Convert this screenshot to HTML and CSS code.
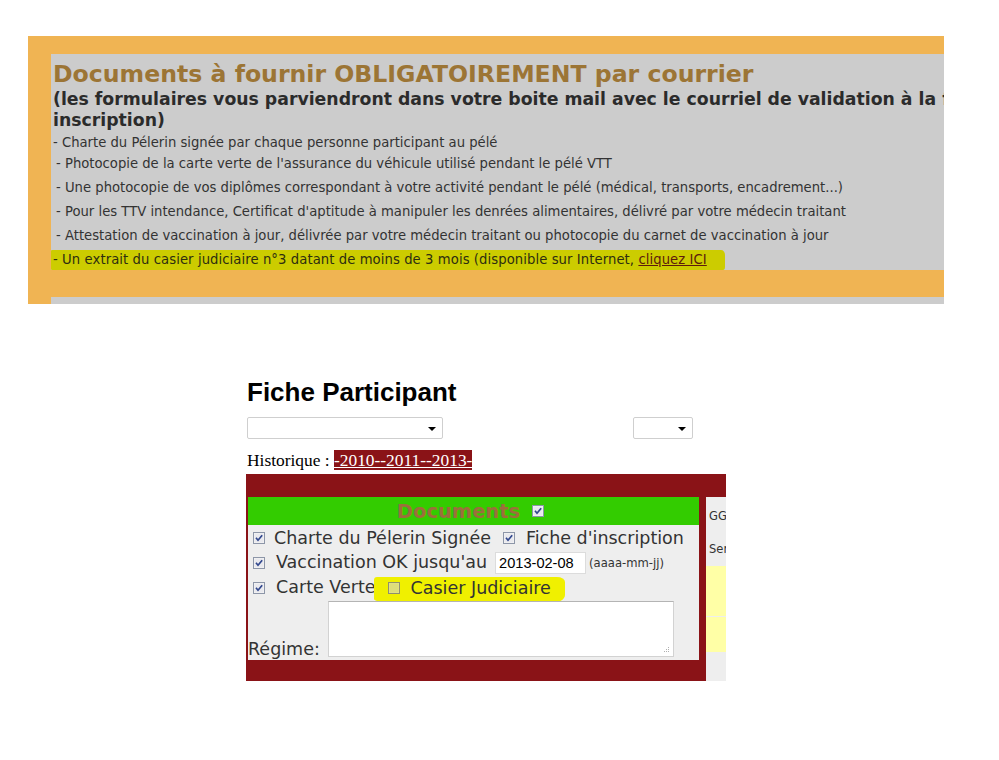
FILE: index.html
```html
<!DOCTYPE html>
<html lang="fr">
<head>
<meta charset="utf-8">
<title>Fiche Participant</title>
<link rel="stylesheet" href="styles.css">
</head>
<body>
<section class="notice">
  <div class="notice-box">
    <h2 class="notice-title">Documents à fournir OBLIGATOIREMENT par courrier</h2>
    <p class="notice-sub">(les formulaires vous parviendront dans votre boite mail avec le courriel de validation à la fin de votre<br>inscription)</p>
    <ul class="notice-list">
      <li class="item-first">- Charte du Pélerin signée par chaque personne participant au pélé</li>
      <li class="item-indent">- Photocopie de la carte verte de l'assurance du véhicule utilisé pendant le pélé VTT</li>
      <li class="item-indent">- Une photocopie de vos diplômes correspondant à votre activité pendant le pélé (médical, transports, encadrement...)</li>
      <li class="item-indent">- Pour les TTV intendance, Certificat d'aptitude à manipuler les denrées alimentaires, délivré par votre médecin traitant</li>
      <li class="item-indent">- Attestation de vaccination à jour, délivrée par votre médecin traitant ou photocopie du carnet de vaccination à jour</li>
      <li class="item-hl"><span class="hl-mark">- Un extrait du casier judiciaire n°3 datant de moins de 3 mois (disponible sur Internet, <a class="hl-link" href="#">cliquez ICI</a></span></li>
    </ul>
  </div>
  <div class="notice-box notice-box-next"></div>
</section>

<main class="fiche">
  <h1 class="fiche-title">Fiche Participant</h1>
  <div class="select-row">
    <div class="select select-wide"><svg class="select-arrow" width="8" height="4" viewBox="0 0 8 4"><path d="M0 0H8L4 4Z" fill="#000"/></svg></div>
    <div class="select select-small"><svg class="select-arrow" width="8" height="4" viewBox="0 0 8 4"><path d="M0 0H8L4 4Z" fill="#000"/></svg></div>
  </div>
  <p class="historique">Historique : <a class="years" href="#">-2010--2011--2013-</a></p>

  <div class="frame">
    <div class="docs">
      <div class="docs-head">
        <span class="docs-head-title">Documents</span>
        <svg class="cb" width="12" height="12" viewBox="0 0 12 12"><rect x="0.5" y="0.5" width="11" height="11" fill="#f4f4f4" stroke="#8d96a8"/><rect x="1.5" y="1.5" width="9" height="9" fill="#e9e9ee"/><path d="M3 5.8L5 8.2L9.2 3.2" stroke="#31478d" stroke-width="1.7" fill="none"/></svg>
      </div>
      <div class="docs-body">
        <div class="row row-1">
          <svg class="cb" width="12" height="12" viewBox="0 0 12 12"><rect x="0.5" y="0.5" width="11" height="11" fill="#f4f4f4" stroke="#8d96a8"/><rect x="1.5" y="1.5" width="9" height="9" fill="#e9e9ee"/><path d="M3 5.8L5 8.2L9.2 3.2" stroke="#31478d" stroke-width="1.7" fill="none"/></svg>
          <span class="label label-a">Charte du Pélerin Signée</span>
          <svg class="cb cb-next" width="12" height="12" viewBox="0 0 12 12"><rect x="0.5" y="0.5" width="11" height="11" fill="#f4f4f4" stroke="#8d96a8"/><rect x="1.5" y="1.5" width="9" height="9" fill="#e9e9ee"/><path d="M3 5.8L5 8.2L9.2 3.2" stroke="#31478d" stroke-width="1.7" fill="none"/></svg>
          <span class="label label-c">Fiche d'inscription</span>
        </div>
        <div class="row row-2">
          <svg class="cb" width="12" height="12" viewBox="0 0 12 12"><rect x="0.5" y="0.5" width="11" height="11" fill="#f4f4f4" stroke="#8d96a8"/><rect x="1.5" y="1.5" width="9" height="9" fill="#e9e9ee"/><path d="M3 5.8L5 8.2L9.2 3.2" stroke="#31478d" stroke-width="1.7" fill="none"/></svg>
          <span class="label label-b">Vaccination OK jusqu'au</span>
          <span class="date-input">2013-02-08</span>
          <span class="date-hint">(aaaa-mm-jj)</span>
        </div>
        <div class="row row-3">
          <svg class="cb" width="12" height="12" viewBox="0 0 12 12"><rect x="0.5" y="0.5" width="11" height="11" fill="#f4f4f4" stroke="#8d96a8"/><rect x="1.5" y="1.5" width="9" height="9" fill="#e9e9ee"/><path d="M3 5.8L5 8.2L9.2 3.2" stroke="#31478d" stroke-width="1.7" fill="none"/></svg>
          <span class="label label-b">Carte Verte</span>
          <span class="marker">
            <svg class="cb" width="12" height="12" viewBox="0 0 12 12"><rect x="0.5" y="0.5" width="11" height="11" fill="#e4e48a" stroke="#8f8f70"/><rect x="1.5" y="1.5" width="9" height="9" fill="#dede7a"/></svg>
            <span class="label label-c">Casier Judiciaire</span>
          </span>
        </div>
        <div class="row row-4">
          <span class="regime-label">Régime:</span>
          <div class="textarea"><svg class="grip" width="6" height="6" viewBox="0 0 6 6"><g fill="#b0b0b0"><rect x="4" y="0" width="1" height="1"/><rect x="2" y="2" width="1" height="1"/><rect x="4" y="2" width="1" height="1"/><rect x="0" y="4" width="1" height="1"/><rect x="2" y="4" width="1" height="1"/><rect x="4" y="4" width="1" height="1"/></g></svg></div>
        </div>
      </div>
    </div>
    <div class="side">
      <div class="side-cell side-cell-1">GG</div>
      <div class="side-cell side-cell-2">Ser</div>
      <div class="side-cell side-yellow side-yellow-1"></div>
      <div class="side-cell side-yellow side-yellow-2"></div>
    </div>
  </div>
</main>
</body>
</html>
```
FILE: styles.css
```css
html, body {
  margin: 0;
  padding: 0;
  background: #ffffff;
}

/* ---------- Top notice ---------- */
.notice {
  margin: 36px 0 0 28px;
  width: 916px;
  height: 268px;
  background: #f0b453;
  overflow: hidden;
  padding: 18px 0 0 23px;
  box-sizing: border-box;
  font-family: "DejaVu Sans", Verdana, sans-serif;
}

.notice-box {
  width: 1100px;
  height: 216px;
  background: #cccccc;
  padding-left: 2px;
  box-sizing: border-box;
}

.notice-box-next {
  height: 60px;
  margin-top: 27px;
}

.notice-title {
  margin: 0;
  padding-top: 5px;
  font-size: 23.6px;
  line-height: 30px;
  font-weight: bold;
  color: #9c7535;
  white-space: nowrap;
}

.notice-sub {
  margin: 0;
  font-size: 17.3px;
  line-height: 21px;
  font-weight: bold;
  color: #2b2b2b;
  white-space: nowrap;
}

.notice-list {
  list-style: none;
  margin: 3px 0 0;
  padding: 0;
  font-size: 13.2px;
  line-height: 24px;
  color: #333333;
  white-space: nowrap;
}

.item-first {
  line-height: 18px;
}

.item-indent {
  padding-left: 3px;
}

.item-hl {
  letter-spacing: 0.08px;
}

.hl-mark {
  margin-left: -2px;
  padding: 2px 18px 3px 2px;
  background: #cccc00;
  border-radius: 1px 4px 2px 1px / 1px 5px 3px 1px;
  color: #2e2e10;
}

.hl-link {
  color: #5e1c0c;
  text-decoration: underline;
}

/* ---------- Fiche participant ---------- */
.fiche {
  margin: 73px 0 0 247px;
  width: 480px;
}

.fiche-title {
  margin: 0;
  font-family: "Liberation Sans", Arial, sans-serif;
  font-size: 26px;
  line-height: 30px;
  font-weight: bold;
  color: #000;
}

.select-row {
  display: flex;
  margin-top: 10px;
}

.select {
  position: relative;
  height: 22px;
  box-sizing: border-box;
  border: 1px solid #cfcfcf;
  border-radius: 2px;
  background: #fff;
}

.select-wide {
  width: 196px;
}

.select-small {
  width: 60px;
  margin-left: 190px;
}

.select-arrow {
  position: absolute;
  right: 6px;
  top: 9px;
}

.historique {
  margin: 11px 0 0;
  font-family: "Liberation Serif", "Times New Roman", serif;
  font-size: 17.4px;
  line-height: 20px;
  color: #000;
}

.years {
  background: #8a1317;
  color: #ffffff;
  text-decoration: underline;
}

.frame {
  display: flex;
  margin: 4px 0 0 -1px;
  width: 480px;
  background: #8a1317;
  padding: 23px 0 0 2px;
  box-sizing: border-box;
  overflow: hidden;
  font-family: "DejaVu Sans", Verdana, sans-serif;
  color: #333333;
}

.docs {
  width: 451px;
  flex: none;
  margin-bottom: 21px;
}

.docs-head {
  height: 28px;
  background: #33cc00;
  display: flex;
  align-items: center;
  justify-content: center;
  gap: 12px;
  padding-right: 6px;
}

.docs-head-title {
  font-size: 19.5px;
  font-weight: bold;
  color: #9c6e3c;
  line-height: 24px;
  padding-top: 1px;
}

.docs-body {
  background: #eeeeee;
  padding: 1px 0 3px 5px;
  font-size: 17.5px;
}

.row {
  display: flex;
  align-items: center;
  white-space: nowrap;
}

.row-1 {
  height: 24px;
}

.row-2,
.row-3 {
  height: 25px;
}

.cb {
  flex: none;
  display: block;
}

.label {
  line-height: 21px;
}

.label-a {
  margin-left: 9px;
}

.label-b {
  margin-left: 11px;
}

.cb-next {
  margin-left: 12px;
}

.label-c {
  margin-left: 11px;
}

.date-input {
  margin-left: 8px;
  width: 91px;
  height: 22px;
  box-sizing: border-box;
  border: 1px solid #dcdcdc;
  background: #fff;
  font-family: "Liberation Sans", Arial, sans-serif;
  font-size: 14.6px;
  line-height: 20px;
  padding-left: 3px;
  color: #000;
}

.date-hint {
  margin-left: 3px;
  font-size: 11.6px;
  color: #333;
}

.marker {
  display: flex;
  align-items: center;
  margin: 5px 0 0 -2px;
  height: 26px;
  padding: 0 14px 4px 14px;
  box-sizing: border-box;
  background: #f0f000;
  border-radius: 3px 8px 14px 22px / 3px 5px 8px 4px;
}

.row-4 {
  align-items: flex-end;
  margin-left: -5px;
  padding-top: 1px;
}

.regime-label {
  line-height: 20px;
  margin-bottom: -2px;
  width: 80px;
}

.textarea {
  position: relative;
  width: 346px;
  height: 56px;
  box-sizing: border-box;
  border: 1px solid #d2d2d2;
  border-top-color: #b4b4b4;
  background: #fff;
}

.grip {
  position: absolute;
  right: 3px;
  bottom: 3px;
}

.side {
  flex: none;
  width: 100px;
  margin-left: 7px;
  background: #eeeeee;
  font-size: 11.5px;
  color: #333;
}

.side-cell {
  padding-left: 3px;
  line-height: 14px;
  box-sizing: border-box;
}

.side-cell-1 {
  height: 35px;
  padding-top: 12px;
}

.side-cell-2 {
  height: 34px;
  padding-top: 10px;
}

.side-yellow {
  background: #ffffa6;
}

.side-yellow-1 {
  height: 50px;
}

.side-yellow-2 {
  height: 35px;
  margin-top: 1px;
}
```
